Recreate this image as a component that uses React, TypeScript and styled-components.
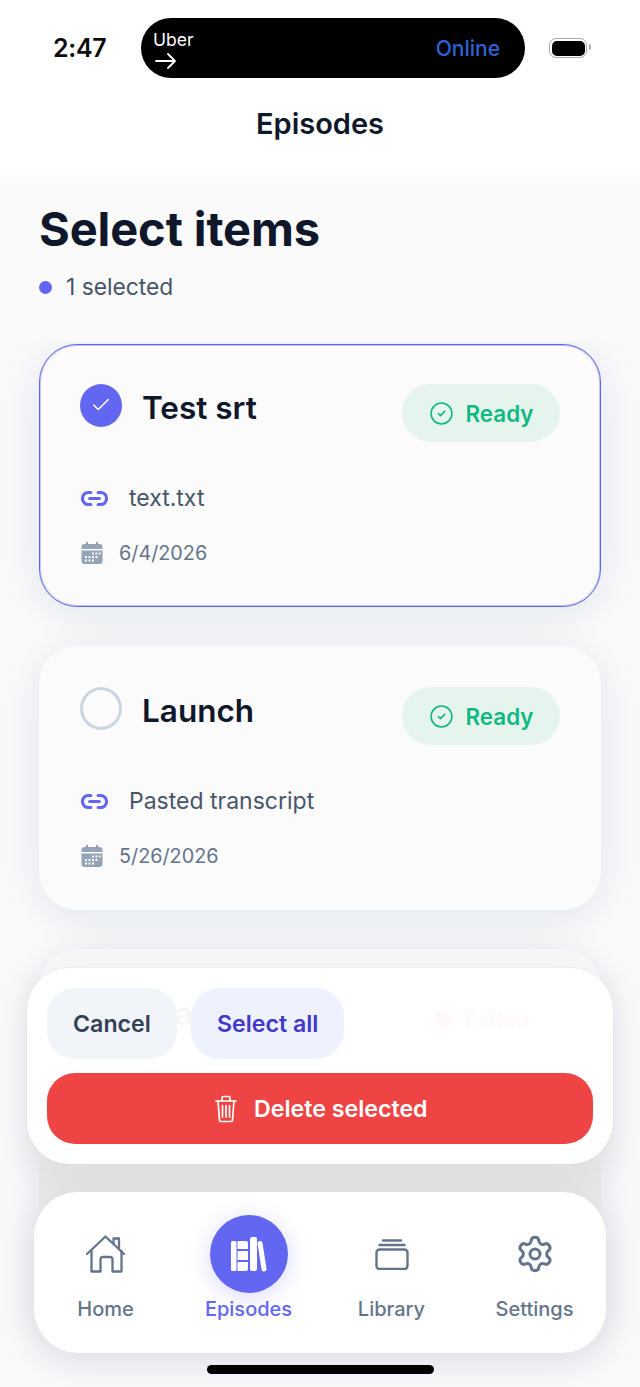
import React from "react";
import styled, { createGlobalStyle } from "styled-components";
import { CircleCheck, Check, Settings, Link2 } from "lucide-react";

const Global = createGlobalStyle`
  html, body { margin: 0; padding: 0; background: #f8fafc; }
  * { box-sizing: border-box; }
  body { font-family: Inter, "Liberation Sans", sans-serif; }
`;

const Phone = styled.div`
  position: relative;
  width: 640px;
  height: 1387px;
  overflow: hidden;
  display: flex;
  flex-direction: column;
  background: #f8fafc;
`;

const Top = styled.div`
  position: relative;
  z-index: 1;
  flex: none;
  background: #fff;
`;

const StatusBar = styled.div`
  display: flex;
  align-items: center;
  height: 96px;
  padding: 18px 50px 18px 53px;
`;

const Clock = styled.div`
  width: 88px;
  font: 600 25px Inter, sans-serif;
  letter-spacing: -0.3px;
  color: #0b0b0b;
  flex: none;
`;

const Island = styled.div`
  width: 384px;
  height: 60px;
  border-radius: 30px;
  background: #000;
  display: flex;
  align-items: center;
  justify-content: space-between;
  padding: 0 25px 0 12px;
  flex: none;
`;

const IslandLeft = styled.div`
  display: flex;
  flex-direction: column;
  gap: 3px;
  color: #fff;
  font: 400 17.5px/20px Inter, sans-serif;
  padding-top: 2px;
`;

const ArrowIcon = styled.svg`
  margin-left: 2px;
`;

const Online = styled.span`
  color: #2f62d6;
  font: 500 21px Inter, sans-serif;
`;

const Battery = styled.div`
  margin-left: 24px;
  position: relative;
  width: 38px;
  height: 20px;
  border: 1.5px solid #a8a8a8;
  border-radius: 7px;
  padding: 1.5px;
  flex: none;
  &::before {
    content: "";
    display: block;
    width: 100%;
    height: 100%;
    border-radius: 5px;
    background: #000;
  }
  &::after {
    content: "";
    position: absolute;
    right: -5px;
    top: 5px;
    width: 2px;
    height: 6px;
    border-radius: 0 2px 2px 0;
    background: #a8a8a8;
  }
`;

const NavTitle = styled.div`
  height: 69px;
  text-align: center;
  font: 600 29px/56px Inter, sans-serif;
  color: #0f172a;
`;

const Header = styled.div`
  height: 177px;
  padding: 37px 39px 0;
  background: linear-gradient(#fff 0, #fafafa 22px, #fafafa 100%);
`;

const Title = styled.h1`
  margin: 0;
  font: 700 47px/54px Inter, sans-serif;
  letter-spacing: -0.1px;
  color: #0f172a;
`;

const Selected = styled.div`
  display: flex;
  align-items: center;
  gap: 14px;
  margin-top: 17px;
  font: 400 22.8px/28px Inter, sans-serif;
  color: #475569;
`;

const Dot = styled.span`
  width: 13px;
  height: 13px;
  border-radius: 50%;
  background: #6366f1;
`;

const List = styled.div`
  display: flex;
  flex-direction: column;
  gap: 39px;
  padding: 2px 39px 0;
`;

const Card = styled.div<{ $selected?: boolean; $faded?: boolean }>`
  height: ${(p) => (p.$faded ? "381px" : p.$selected ? "263px" : "264px")};
  flex: none;
  padding: ${(p) => (p.$selected ? "38px 39px 0" : "40px 40px 0")};
  border-radius: ${(p) => (p.$faded ? "38px 38px 0 0" : "38px")};
  background: ${(p) => (p.$faded ? "linear-gradient(#f7f8f8, #f4f4f5 50%, #ebebec 58%, #ececec)" : "#fbfbfc")};
  border: ${(p) => (p.$selected ? "1px solid #5f64e0" : "none")};
  box-shadow: ${(p) => (p.$selected ? "inset 0 0 0 1px rgba(95, 100, 224, 0.35), " : "")}0 6px 44px rgba(15, 23, 42, 0.09);
`;

const CardTop = styled.div`
  display: flex;
  justify-content: space-between;
  align-items: flex-start;
`;

const TitleGroup = styled.div`
  display: flex;
  align-items: center;
  gap: 20px;
  height: 44px;
`;

const Checkbox = styled.span<{ $on?: boolean }>`
  width: 42px;
  height: 43px;
  margin-left: 1px;
  border-radius: 50%;
  display: flex;
  align-items: center;
  justify-content: center;
  background: ${(p) => (p.$on ? "#6366f1" : "#fbfbfc")};
  border: ${(p) => (p.$on ? "none" : "3px solid #cbd5e1")};
  color: #fff;
`;

const CardTitle = styled.div`
  font: 600 31.5px/44px Inter, sans-serif;
  color: #0f172a;
  padding-top: 5px;
`;

const Pill = styled.div<{ $failed?: boolean }>`
  width: 158px;
  height: 58px;
  border-radius: 29px;
  background: ${(p) => (p.$failed ? "transparent" : "#e6f4ee")};
  display: flex;
  align-items: center;
  justify-content: center;
  gap: 12px;
  margin: 1px 1px 0 0;
  font: 600 22.4px Inter, sans-serif;
  color: ${(p) => (p.$failed ? "#ef4444" : "#10b981")};
`;

const FailDot = styled.span`
  width: 20px;
  height: 20px;
  border-radius: 50%;
  background: #ef4444;
`;

const SourceRow = styled.div`
  display: flex;
  align-items: center;
  gap: 20px;
  margin-top: 42px;
  height: 28px;
  padding-left: 1px;
  font: 400 23px/28px Inter, sans-serif;
  color: #475569;
`;

const DateRow = styled.div`
  display: flex;
  align-items: center;
  gap: 15px;
  margin-top: 27px;
  height: 28px;
  padding-left: 1px;
  font: 400 19.8px/28px Inter, sans-serif;
  color: #64748b;
`;

const ActionBar = styled.div`
  position: absolute;
  left: 27px;
  top: 968px;
  width: 585.5px;
  height: 196px;
  padding: 20px;
  border-radius: 42px;
  background: rgba(255, 255, 255, 0.97);
  box-shadow: 0 14px 44px rgba(15, 23, 42, 0.08), 0 0 1px rgba(15, 23, 42, 0.2);
  display: flex;
  flex-direction: column;
  gap: 14px;
`;

const ActionRow = styled.div`
  display: flex;
  gap: 14px;
`;

const Btn = styled.div<{ $variant: "cancel" | "all" | "del" }>`
  height: 71px;
  border-radius: 28px;
  display: flex;
  align-items: center;
  justify-content: center;
  gap: 17px;
  font: 600 23.2px Inter, sans-serif;
  padding: ${(p) => (p.$variant === "del" ? "0 0 0 3px" : "1px 26px 0")};
  background: ${(p) => ({ cancel: "#f1f5f9", all: "#eef2ff", del: "#ef4444" }[p.$variant])};
  color: ${(p) => ({ cancel: "#334155", all: "#4338ca", del: "#fff" }[p.$variant])};
`;

const TabBar = styled.div`
  position: absolute;
  left: 34px;
  top: 1192px;
  width: 572px;
  height: 161px;
  border-radius: 44px;
  background: #fff;
  box-shadow: 0 10px 40px rgba(15, 23, 42, 0.1);
  display: grid;
  grid-template-columns: repeat(4, 1fr);
`;

const Tab = styled.div<{ $active?: boolean }>`
  display: flex;
  flex-direction: column;
  align-items: center;
  padding-top: 23px;
  font: 500 20px/24px Inter, sans-serif;
  color: ${(p) => (p.$active ? "#6366f1" : "#64748b")};
`;

const TabIcon = styled.div<{ $active?: boolean }>`
  width: 78px;
  height: 78px;
  border-radius: 50%;
  display: flex;
  align-items: center;
  justify-content: center;
  margin-bottom: 4px;
  background: ${(p) => (p.$active ? "#6366f1" : "transparent")};
  box-shadow: ${(p) => (p.$active ? "0 4px 22px rgba(99, 102, 241, 0.25)" : "none")};
  color: ${(p) => (p.$active ? "#fff" : "#64748b")};
`;

const HomeBar = styled.div`
  position: absolute;
  left: 207px;
  top: 1365px;
  width: 227px;
  height: 9px;
  border-radius: 5px;
  background: #000;
`;

const CalendarIcon = () => (
  <svg width="24" height="24" viewBox="0 0 24 24">
    <path fill="#94a3b8" d="M6 1h2v3H6zM16 1h2v3h-2zM1.5 6a3 3 0 0 1 3-3h15a3 3 0 0 1 3 3v2h-21zM1.5 9.5h21V20a3 3 0 0 1-3 3h-15a3 3 0 0 1-3-3z" />
    <g fill="#fff">
      <rect x="12" y="11.5" width="2" height="2" />
      <rect x="15.5" y="11.5" width="2" height="2" />
      <rect x="19" y="11.5" width="1.6" height="2" />
      <rect x="5" y="15" width="2" height="2" />
      <rect x="8.5" y="15" width="2" height="2" />
      <rect x="12" y="15" width="2" height="2" />
      <rect x="15.5" y="15" width="2" height="2" />
      <rect x="5" y="18.5" width="2" height="2" />
      <rect x="8.5" y="18.5" width="2" height="2" />
      <rect x="12" y="18.5" width="2" height="2" />
    </g>
  </svg>
);

const HomeIcon = () => (
  <svg width="40" height="40" viewBox="0 0 40 40" fill="none" stroke="currentColor" strokeWidth="2.3" strokeLinejoin="round" strokeLinecap="round">
    <path d="M1 20 19.5 2.5 38 20" />
    <path d="M27.5 9.5V4.5h5.5V15" />
    <path d="M5.5 17v20.5h9V25.5q0-2.5 2.5-2.5h7q2.5 0 2.5 2.5v12h9V17" />
  </svg>
);

const BooksIcon = () => (
  <svg width="40" height="38" viewBox="0 0 40 38" fill="#fff">
    <rect x="2" y="6" width="5.5" height="30" rx="1.6" />
    <path d="M8.5 6h8.5a2 2 0 0 1 2 2v6H8.5zM8.5 16H19v9H8.5zM8.5 27H19v7a2 2 0 0 1-2 2H8.5z" />
    <rect x="21" y="2" width="7" height="34" rx="2" />
    <rect x="30.5" y="6" width="5" height="30.5" rx="2" transform="rotate(-9 33 21)" />
  </svg>
);

const LibraryIcon = () => (
  <svg width="34" height="32" viewBox="0 0 34 32" fill="none" stroke="currentColor" strokeWidth="2.4" strokeLinecap="round" strokeLinejoin="round">
    <path d="M8 2.5h18" />
    <path d="M4.5 7h25" />
    <rect x="1.5" y="11.5" width="31" height="19.5" rx="3" />
  </svg>
);

const TrashIcon = () => (
  <svg width="22" height="28" viewBox="0 0 22 28" fill="none" stroke="currentColor" strokeWidth="1.7" strokeLinecap="round" strokeLinejoin="round">
    <path d="M1 6h20" />
    <path d="M7 6V3a1.5 1.5 0 0 1 1.5-1.5h5A1.5 1.5 0 0 1 15 3v3" />
    <path d="M3 6l1.5 19a1.5 1.5 0 0 0 1.5 1.5h10a1.5 1.5 0 0 0 1.5-1.5L19 6" />
    <path d="M7.5 10.5v11.5M11 10.5v11.5M14.5 10.5v11.5" />
  </svg>
);

function Item(props: {
  title: string;
  source: string;
  date: string;
  selected?: boolean;
}) {
  return (
    <Card $selected={props.selected}>
      <CardTop>
        <TitleGroup>
          <Checkbox $on={props.selected}>
            {props.selected && <Check size={22} strokeWidth={1.6} />}
          </Checkbox>
          <CardTitle>{props.title}</CardTitle>
        </TitleGroup>
        <Pill>
          <CircleCheck size={25} strokeWidth={1.5} />
          Ready
        </Pill>
      </CardTop>
      <SourceRow>
        <Link2 size={29} strokeWidth={2.6} color="#6366f1" />
        {props.source}
      </SourceRow>
      <DateRow>
        <CalendarIcon />
        {props.date}
      </DateRow>
    </Card>
  );
}

export default function App() {
  return (
    <Phone>
      <Global />
      <Top>
        <StatusBar>
          <Clock>2:47</Clock>
          <Island>
            <IslandLeft>
              Uber
              <ArrowIcon width="22" height="16" viewBox="0 0 22 16" fill="none" stroke="#fff" strokeWidth="1.8" strokeLinecap="round" strokeLinejoin="round">
                <path d="M1 8h19M13 1l7 7-7 7" />
              </ArrowIcon>
            </IslandLeft>
            <Online>Online</Online>
          </Island>
          <Battery />
        </StatusBar>
        <NavTitle>Episodes</NavTitle>
        <Header>
          <Title>Select items</Title>
          <Selected>
            <Dot />1 selected
          </Selected>
        </Header>
      </Top>
      <List>
        <Item title="Test srt" source="text.txt" date="6/4/2026" selected />
        <Item title="Launch" source="Pasted transcript" date="5/26/2026" />
        <Card $faded>
          <CardTop>
            <TitleGroup>
              <Checkbox />
              <CardTitle>Brand</CardTitle>
            </TitleGroup>
            <Pill $failed>
              <FailDot />
              Failed
            </Pill>
          </CardTop>
        </Card>
      </List>
      <ActionBar>
        <ActionRow>
          <Btn $variant="cancel">Cancel</Btn>
          <Btn $variant="all">Select all</Btn>
        </ActionRow>
        <Btn $variant="del">
          <TrashIcon />
          Delete selected
        </Btn>
      </ActionBar>
      <TabBar>
        <Tab>
          <TabIcon><HomeIcon /></TabIcon>
          Home
        </Tab>
        <Tab $active>
          <TabIcon $active><BooksIcon /></TabIcon>
          Episodes
        </Tab>
        <Tab>
          <TabIcon><LibraryIcon /></TabIcon>
          Library
        </Tab>
        <Tab>
          <TabIcon><Settings size={40} strokeWidth={1.8} /></TabIcon>
          Settings
        </Tab>
      </TabBar>
      <HomeBar />
    </Phone>
  );
}
